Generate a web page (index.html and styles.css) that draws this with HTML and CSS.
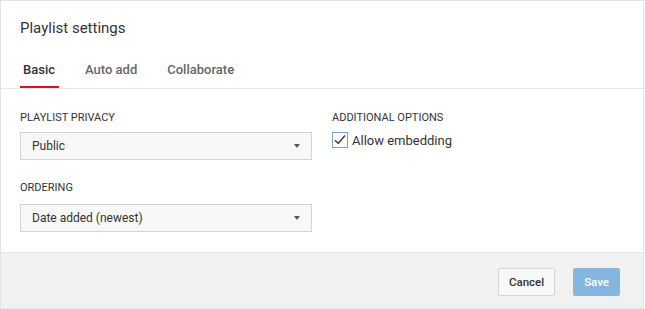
FILE: index.html
```html
<!DOCTYPE html>
<html>
<head>
<meta charset="utf-8">
<link rel="stylesheet" href="styles.css">
</head>
<body>
<div class="dialog">
  <div class="header">
    <h1 class="title">Playlist settings</h1>
    <div class="tabs">
      <span class="tab active">Basic</span>
      <span class="tab">Auto add</span>
      <span class="tab">Collaborate</span>
    </div>
  </div>
  <div class="content">
    <div class="col">
      <div class="label">PLAYLIST PRIVACY</div>
      <div class="select"><span>Public</span><i class="arrow"></i></div>
      <div class="label second">ORDERING</div>
      <div class="select"><span>Date added (newest)</span><i class="arrow"></i></div>
    </div>
    <div class="col">
      <div class="label">ADDITIONAL OPTIONS</div>
      <label class="check">
        <svg class="box" width="16" height="16" viewBox="0 0 16 16">
          <rect x="0.5" y="0.5" width="15" height="15" fill="#fff" stroke="#7c9fd3"/>
          <path d="M3 8.2 L6.3 11.3 L13 3.6" fill="none" stroke="#444" stroke-width="1.5"/>
        </svg>
        <span>Allow embedding</span>
      </label>
    </div>
  </div>
  <div class="footer">
    <button class="btn cancel">Cancel</button>
    <button class="btn save">Save</button>
  </div>
</div>
</body>
</html>
```

FILE: styles.css
```css
* { box-sizing: border-box; }
html, body { margin: 0; padding: 0; background: #fff; }
body { font-family: Roboto, "Noto Sans", Arial, sans-serif; color: #333; }

.dialog {
  width: 644px;
  height: 309px;
  border: 1px solid #e3e3e3;
  display: flex;
  flex-direction: column;
  background: #fff;
}

.header {
  padding: 17px 19px 0;
  border-bottom: 1px solid #e8e8e8;
}
.title {
  margin: 0;
  font-size: 15px;
  line-height: 20px;
  font-weight: 400;
  color: #333;
}
.tabs {
  display: flex;
  gap: 23px;
  margin-top: 24px;
}
.tab {
  font-size: 13px;
  line-height: 16px;
  font-weight: 500;
  color: #666;
  padding: 0 4px 8px 3px;
  border-bottom: 2px solid transparent;
}
.tab.active {
  color: #333;
  border-bottom-color: #cc181e;
}

.content {
  flex: 1;
  display: grid;
  grid-template-columns: 292px 1fr;
  column-gap: 20px;
  padding: 22px 19px 0;
}
.label {
  font-size: 11px;
  line-height: 13px;
  color: #333;
  margin-bottom: 8px;
}
.label.second { margin-top: 21px; margin-bottom: 10px; }

.select {
  height: 28px;
  border: 1px solid #d3d3d3;
  background: #f8f8f8;
  display: flex;
  align-items: center;
  justify-content: space-between;
  padding: 0 11px;
  font-size: 12px;
  font-weight: 400;
  color: #333;
}
.arrow {
  width: 0;
  height: 0;
  border-left: 3.5px solid transparent;
  border-right: 3.5px solid transparent;
  border-top: 4px solid #555;
}

.check {
  display: flex;
  align-items: center;
  gap: 4px;
  font-size: 13px;
  color: #333;
}
.box { display: block; }

.footer {
  height: 56px;
  border-top: 1px solid #e8e8e8;
  background: #f1f1f1;
  display: flex;
  justify-content: flex-end;
  align-items: flex-start;
  gap: 18px;
  padding: 15px 23px 0 0;
}
.btn {
  height: 28px;
  font-family: Roboto, Arial, sans-serif;
  font-size: 11.5px;
  font-weight: 500;
  padding: 0 10px;
  border-radius: 2px;
  border: 1px solid #d3d3d3;
}
.cancel { background: #f8f8f8; color: #333; }
.save { background: #84b6df; border-color: #84b6df; color: #fff; }
```
